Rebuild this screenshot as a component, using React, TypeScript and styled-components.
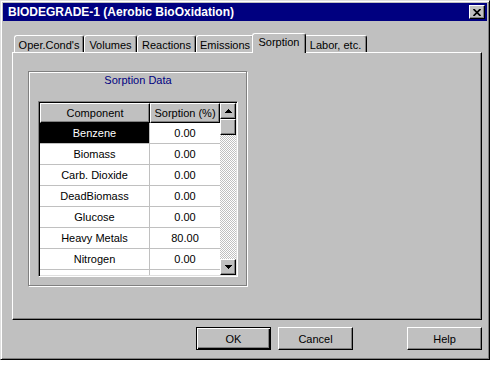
import styled, { createGlobalStyle } from 'styled-components'

const GlobalStyle = createGlobalStyle`
  body {
    margin: 0;
    background: #fff;
    font-family: "Liberation Sans", Arial, sans-serif;
    font-size: 11px;
    color: #000;
  }
`

const Window = styled.div`
  width: 490px;
  height: 360px;
  box-sizing: border-box;
  background: #c0c0c0;
  border: 1px solid;
  border-color: #dfdfdf #000 #000 #dfdfdf;
  box-shadow: inset 1px 1px #fff, inset -1px -1px #808080;
  padding: 2px;
  display: flex;
  flex-direction: column;
`

const TitleBar = styled.div`
  height: 18px;
  background: #000080;
  color: #fff;
  display: flex;
  align-items: center;
  justify-content: space-between;
  padding: 0 2px 0 5px;
  font-weight: bold;
  font-size: 12px;
`

const Raised = styled.div`
  box-sizing: border-box;
  background: #c0c0c0;
  border: 1px solid;
  border-color: #fff #000 #000 #fff;
  box-shadow: inset -1px -1px #808080;
  display: flex;
  align-items: center;
  justify-content: center;
`

const CloseBtn = styled(Raised)`
  width: 16px;
  height: 14px;
`

const Body = styled.div`
  display: flex;
  flex-direction: column;
  padding: 12px 5px 0 9px;
`

const TabRow = styled.div`
  display: flex;
  align-items: flex-end;
  height: 19px;
  padding-left: 2px;
  position: relative;
  z-index: 1;
`

const Tab = styled.div<{ $w: number; $active?: boolean }>`
  box-sizing: border-box;
  width: ${({ $w, $active }) => $w + ($active ? 4 : 0)}px;
  height: ${({ $active }) => ($active ? 20 : 17)}px;
  margin: 0 ${({ $active }) => ($active ? -2 : 0)}px ${({ $active }) => ($active ? -1 : 0)}px;
  background: #c0c0c0;
  border: 1px solid;
  border-color: #fff #000 transparent #fff;
  border-bottom: none;
  border-radius: 3px 3px 0 0;
  box-shadow: inset -1px 0 #808080;
  padding-top: ${({ $active }) => ($active ? 2 : 3)}px;
  line-height: 13px;
  text-align: center;
  white-space: nowrap;
  position: relative;
  z-index: ${({ $active }) => ($active ? 2 : 1)};
`

const Panel = styled.div`
  height: 268px;
  box-sizing: border-box;
  border: 1px solid;
  border-color: #fff #000 #000 #fff;
  box-shadow: inset -1px -1px #808080;
  padding: 18px 0 0 15px;
`

const GroupBox = styled.div`
  width: 219px;
  height: 215px;
  box-sizing: border-box;
  border: 1px solid #808080;
  box-shadow: inset 1px 1px #fff, 1px 1px #fff;
  padding: 1px 8px 0 9px;
`

const GroupTitle = styled.div`
  text-align: center;
  color: #000080;
  line-height: 14px;
`

const Grid = styled.div`
  width: 200px;
  height: 176px;
  box-sizing: border-box;
  margin-top: 14px;
  border: 1px solid;
  border-color: #808080 #fff #fff #808080;
  box-shadow: inset 1px 1px #000, inset -1px -1px #dfdfdf;
  padding: 1px;
  display: flex;
`

const TableArea = styled.div`
  flex: 1;
  overflow: hidden;
  background: #fff;
`

const HeaderRow = styled.div`
  display: flex;
  height: 20px;
`

const HeaderCell = styled(Raised)<{ $w: number }>`
  width: ${({ $w }) => $w}px;
  height: 20px;
`

const Row = styled.div`
  display: flex;
  height: 21px;
  box-sizing: border-box;
  border-bottom: 1px solid #c0c0c0;
`

const Cell = styled.div<{ $w: number; $sel?: boolean; $line?: boolean }>`
  width: ${({ $w }) => $w}px;
  box-sizing: border-box;
  display: flex;
  align-items: center;
  justify-content: center;
  background: ${({ $sel }) => ($sel ? '#000' : '#fff')};
  color: ${({ $sel }) => ($sel ? '#fff' : '#000')};
  border-right: ${({ $line }) => ($line ? '1px solid #c0c0c0' : 'none')};
`

const ScrollBar = styled.div`
  width: 16px;
  display: flex;
  flex-direction: column;
  background: repeating-conic-gradient(#c0c0c0 0 25%, #fff 0 50%) 0 0 / 2px 2px;
`

const ScrollBtn = styled(Raised)`
  width: 16px;
  height: 16px;
`

const Track = styled.div`
  flex: 1;
`

const Footer = styled.div`
  display: flex;
  justify-content: flex-end;
  gap: 7px;
  margin-top: 7px;
`

const Button = styled.div<{ $default?: boolean; $push?: number }>`
  width: 75px;
  height: 23px;
  box-sizing: border-box;
  background: #c0c0c0;
  border: 1px solid;
  border-color: ${({ $default }) => ($default ? '#000' : '#fff #000 #000 #fff')};
  box-shadow: ${({ $default }) =>
    $default ? 'inset 1px 1px #fff, inset -1px -1px #000, inset -2px -2px #808080' : 'inset -1px -1px #808080'};
  margin-left: ${({ $push }) => $push ?? 0}px;
  display: flex;
  align-items: center;
  justify-content: center;
`

const tabs = [
  { label: "Oper.Cond's", w: 70 },
  { label: 'Volumes', w: 53 },
  { label: 'Reactions', w: 59 },
  { label: 'Emissions', w: 58 },
  { label: 'Sorption', w: 50, active: true },
  { label: 'Labor, etc.', w: 63 },
]

const rows = [
  ['Benzene', '0.00'],
  ['Biomass', '0.00'],
  ['Carb. Dioxide', '0.00'],
  ['DeadBiomass', '0.00'],
  ['Glucose', '0.00'],
  ['Heavy Metals', '80.00'],
  ['Nitrogen', '0.00'],
  ['Oxygen', '0.00'],
]

const Arrow = ({ up }: { up?: boolean }) => (
  <svg width="7" height="4" viewBox="0 0 7 4" shapeRendering="crispEdges">
    <polygon points={up ? '0,4 7,4 3.5,0' : '0,0 7,0 3.5,4'} fill="#000" />
  </svg>
)

export default function App() {
  return (
    <>
      <GlobalStyle />
      <Window>
        <TitleBar>
          <span>BIODEGRADE-1 (Aerobic BioOxidation)</span>
          <CloseBtn>
            <svg width="8" height="7" viewBox="0 0 8 7">
              <path d="M0.5 0 L7.5 7 M7.5 0 L0.5 7" stroke="#000" strokeWidth="1.7" />
            </svg>
          </CloseBtn>
        </TitleBar>
        <Body>
          <TabRow>
            {tabs.map((t) => (
              <Tab key={t.label} $w={t.w} $active={t.active}>
                {t.label}
              </Tab>
            ))}
          </TabRow>
          <Panel>
            <GroupBox>
              <GroupTitle>Sorption Data</GroupTitle>
              <Grid>
                <TableArea>
                  <HeaderRow>
                    <HeaderCell $w={110}>Component</HeaderCell>
                    <HeaderCell $w={70}>Sorption (%)</HeaderCell>
                  </HeaderRow>
                  {rows.map(([name, val], i) => (
                    <Row key={name}>
                      <Cell $w={110} $line $sel={i === 0}>{name}</Cell>
                      <Cell $w={70}>{val}</Cell>
                    </Row>
                  ))}
                </TableArea>
                <ScrollBar>
                  <ScrollBtn><Arrow up /></ScrollBtn>
                  <ScrollBtn />
                  <Track />
                  <ScrollBtn><Arrow /></ScrollBtn>
                </ScrollBar>
              </Grid>
            </GroupBox>
          </Panel>
          <Footer>
            <Button $default>OK</Button>
            <Button>Cancel</Button>
            <Button $push={47}>Help</Button>
          </Footer>
        </Body>
      </Window>
    </>
  )
}
